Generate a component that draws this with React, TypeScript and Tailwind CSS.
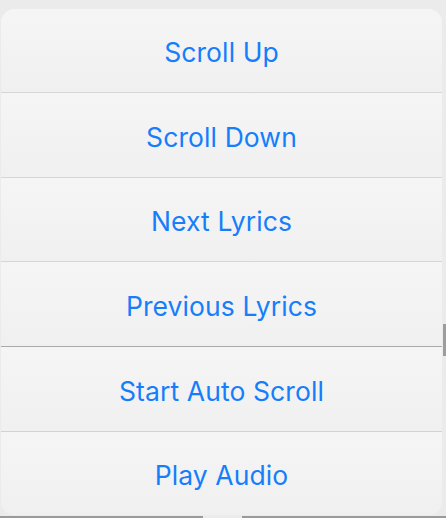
import React from 'react';

const actions = [
  { label: 'Scroll Up', h: 'h-[84px]', line: 'border-[#d6d6d6]' },
  { label: 'Scroll Down', h: 'h-[85px]', line: 'border-[#d6d6d6]' },
  { label: 'Next Lyrics', h: 'h-[84px]', line: 'border-[#d6d6d6]' },
  { label: 'Previous Lyrics', h: 'h-[85px]', line: 'border-[#a9a9a9]' },
  { label: 'Start Auto Scroll', h: 'h-[85px]', line: 'border-[#d2d2d2]' },
  { label: 'Play Audio', h: 'h-[83px]', line: 'border-transparent' },
];

function ActionRow({ label, h, line, last }: { label: string; h: string; line: string; last: boolean }) {
  return (
    <button
      className={`flex w-full items-center justify-center bg-gradient-to-b from-[#f5f5f5] to-[#f0f0f0] ${h} ${
        last ? '' : `border-b ${line}`
      }`}
    >
      <span
        className="pt-[5px] text-[26.5px] tracking-[0.1px] text-[#167efb]"
        style={{ fontFamily: 'Inter, "Noto Sans", sans-serif' }}
      >
        {label}
      </span>
    </button>
  );
}

export default function App() {
  return (
    <div className="relative flex h-[518px] w-[446px] flex-col overflow-hidden bg-[#ebebeb] pt-[9px]">
      {/* scrollbar thumb of the page under the sheet */}
      <div className="absolute right-0 top-[324px] h-[32px] w-[3px] bg-[#9d9d9d]" />

      <div className="relative z-10 ml-[1px] w-[441px] overflow-hidden rounded-[14px] bg-[#f4f4f4]">
        {actions.map((a, i) => (
          <ActionRow key={a.label} {...a} last={i === actions.length - 1} />
        ))}
      </div>

      <div className="mt-auto flex h-[2px] justify-between">
        <div className="w-[203px] bg-[#9a9a9a]" />
        <div className="w-[204px] bg-[#9a9a9a]" />
      </div>
    </div>
  );
}
